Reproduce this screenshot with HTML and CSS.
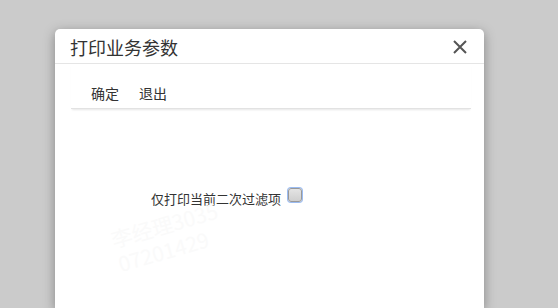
FILE: index.html
```html
<!DOCTYPE html>
<html>
<head>
  <meta charset="utf-8">
  <title>打印业务参数</title>
  <link rel="stylesheet" href="styles.css">
</head>
<body>
  <div class="dialog">
    <div class="dialog-header">
      <span class="dialog-title">打印业务参数</span>
      <span class="dialog-close">
        <svg width="16" height="16" viewBox="0 0 16 16">
          <path d="M2 2 L14 14 M14 2 L2 14" stroke="#555" stroke-width="2" fill="none"/>
        </svg>
      </span>
    </div>
    <div class="dialog-body">
      <div class="toolbar">
        <button type="button" class="tool-btn">确定</button>
        <button type="button" class="tool-btn">退出</button>
      </div>
      <div class="form-row">
        <label for="only-filter">仅打印当前二次过滤项</label>
        <input type="checkbox" id="only-filter">
      </div>
      <div class="watermark">
        <div>李经理3035</div>
        <div>07201429</div>
      </div>
    </div>
  </div>
</body>
</html>
```

FILE: styles.css
```css
body {
  margin: 0;
  padding: 0;
  background-color: #cbcbcb;
  font-family: "Noto Sans CJK SC", "Liberation Sans", sans-serif;
  overflow: hidden;
}

.dialog {
  width: 429px;
  height: 279px;
  margin: 29px 0 0 55px;
  background-color: #fff;
  border-radius: 5px 5px 0 0;
  box-shadow: 0 3px 12px rgba(0, 0, 0, 0.35);
  overflow: hidden;
}

.dialog-header {
  height: 34px;
  display: flex;
  align-items: center;
  justify-content: space-between;
  padding: 0 16px 0 15px;
  border-bottom: 1px solid #e5e5e5;
}

.dialog-title {
  font-size: 18px;
  color: #333;
  line-height: 34px;
  padding-top: 2px;
}

.dialog-close {
  display: flex;
  margin-top: 2px;
}

.dialog-body {
  position: relative;
  padding: 0 13px 0 16px;
  height: 244px;
}

.toolbar {
  display: flex;
  gap: 6px;
  padding: 17px 0 0 13px;
  height: 27px;
  border-bottom: 1px solid #e2e2e2;
  box-shadow: 0 2px 2px -1px rgba(0, 0, 0, 0.1);
  margin-bottom: 79px;
}

.tool-btn {
  background: none;
  border: none;
  padding: 0 7px;
  font-family: inherit;
  font-size: 14px;
  color: #333;
  line-height: 24px;
  height: 24px;
}

.form-row {
  display: flex;
  align-items: flex-start;
  padding-left: 80px;
}

.form-row label {
  font-size: 13px;
  color: #333;
  line-height: 18px;
  margin-top: 2px;
}

.form-row input {
  margin: 0 0 0 7px;
  width: 14px;
  height: 14px;
  appearance: none;
  background: linear-gradient(#e4e4e4, #cfcfcf);
  border: 1px solid #999;
  border-radius: 3px;
  box-shadow: 0 0 0 1px #9bbcf2;
}

.watermark {
  position: absolute;
  left: 58px;
  top: 148px;
  transform: rotate(-16deg);
  color: #fafafa;
  font-size: 21px;
  line-height: 25px;
}
```
